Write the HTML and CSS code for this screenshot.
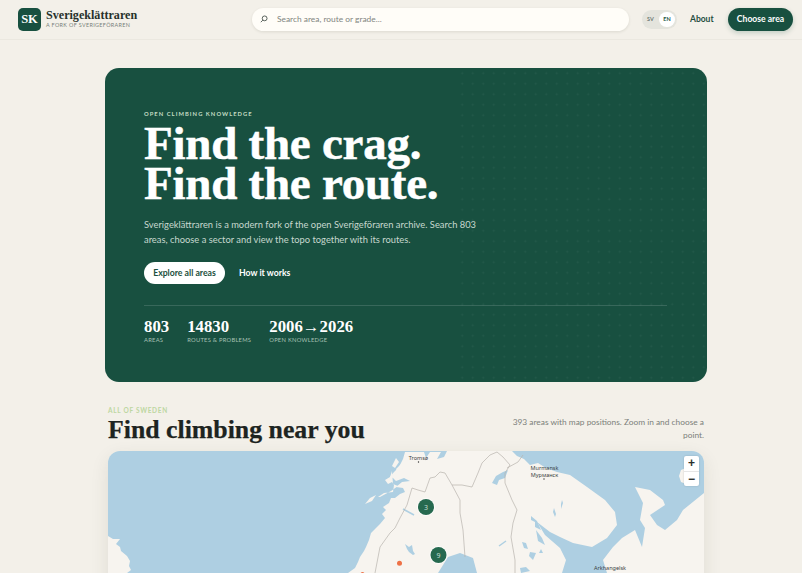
FILE: index.html
```html
<!DOCTYPE html>
<html lang="en">
<head>
<meta charset="utf-8">
<title>Sverigeklättraren</title>
<link rel="stylesheet" href="styles.css">
</head>
<body>
<header class="topbar">
  <a class="brand" href="#">
    <span class="brand-mark">SK</span>
    <span class="brand-text">
      <span class="brand-name">Sverigeklättraren</span>
      <span class="brand-sub">A FORK OF SVERIGEFÖRAREN</span>
    </span>
  </a>
  <label class="search">
    <svg class="search-icon" viewBox="0 0 10 10" width="8" height="8" aria-hidden="true"><circle cx="5.8" cy="4.2" r="3" fill="none" stroke="#33403a" stroke-width="1"/><path d="M3.6 6.4 1 9" fill="none" stroke="#33403a" stroke-width="1"/></svg>
    <span class="search-text">Search area, route or grade...</span>
  </label>
  <div class="lang">
    <span class="lang-opt">SV</span>
    <span class="lang-opt lang-on">EN</span>
  </div>
  <a class="about" href="#">About</a>
  <a class="cta" href="#">Choose area</a>
</header>
<main class="page">
  <section class="hero">
    <div class="eyebrow">OPEN CLIMBING KNOWLEDGE</div>
    <h1 class="hero-title">Find the crag.<br>Find the route.</h1>
    <p class="hero-lead">Sverigeklättraren is a modern fork of the open Sverigeföraren archive. Search 803 areas, choose a sector and view the topo together with its routes.</p>
    <div class="hero-actions">
      <a class="btn-white" href="#">Explore all areas</a>
      <a class="btn-ghost" href="#">How it works</a>
    </div>
    <div class="stats">
      <div class="stat"><div class="stat-num">803</div><div class="stat-label">AREAS</div></div>
      <div class="stat"><div class="stat-num">14830</div><div class="stat-label">ROUTES &amp; PROBLEMS</div></div>
      <div class="stat"><div class="stat-num">2006→2026</div><div class="stat-label">OPEN KNOWLEDGE</div></div>
    </div>
  </section>
  <section class="near">
    <div class="near-head">
      <div>
        <div class="near-eyebrow">ALL OF SWEDEN</div>
        <h2 class="near-title">Find climbing near you</h2>
      </div>
      <p class="near-note">393 areas with map positions. Zoom in and choose a point.</p>
    </div>
    <div class="map">
      <svg class="map-svg" viewBox="108 451 596 420" width="596" height="420" aria-label="Map of northern Scandinavia">
        <rect class="water" x="108" y="451" width="596" height="420"/>
        <!-- Land mass, Norway coast round to Kola and the Arkhangelsk shore -->
        <path class="land" d="M348 573 355 568 358 562 360 557 364 551 366 547 369 540 371 533 376 528 380 524 385 518 382 514 386 510 383 507 389 503 391 498 395 498 400 494 405 492 403 488 396 487 402 482 410 481 404 478 396 481 393 478 390 477 394 472 399 467 403 459 405 452 424 452 426 458 430 452 441 452 437 459 444 457 447 451 452 451 512 451 517 456 524 459 530 465 538 463 546 468 557 472 570 475 587 487 605 500 615 512 617 525 607 538 592 547 573 543 560 537 550 532 537 522 545 535 560 548 566 560 562 573 607 573 603 560 613 547 622 538 635 530 642 547 645 528 640 520 643 503 635 487 650 490 663 500 665 505 650 515 657 525 665 530 677 520 683 510 704 493 704 871 108 871 108 536 113 539 120 539 116 544 120 547 121 551 127 556 130 561 129 566 131 570 127 573 200 871 340 871Z"/>
        <!-- Norwegian islands -->
        <path class="land" d="M365 504 370 498 376 495 372 501ZM378 497 384 493 393 492 394 485 392 482 388 484 385 480 390 477 392 471 393 484 398 486 391 491 380 497Z"/>
        <path class="land" d="M396 469 402 463 404 468 398 472ZM392 466 396 458 399 462 395 468Z"/>
        <!-- Lakes and gulfs -->
        <path class="water" d="M438 573 448 557 460 553 473 558 477 573Z"/>
        <path class="water" d="M492 483 496 476 503 472 508 470 505 478 499 480 497 485Z"/>
        <path class="water-line" d="M403 509 414 515"/>
        <path class="water" d="M405 544 409 547 412 545 413 551 415 554 413 555 409 552 407 549Z"/>
        <path class="water-line" d="M499 546 506 541"/>
        <path class="water" d="M522 542 526 543 528 549 524 548ZM530 552 536 553 533 560 529 556ZM541 549 543 553 539 553Z"/>
        <path class="water" d="M531 516 537 521 541 530 535 527 535 522 531 520ZM536 530 542 538 545 545 538 541Z"/>
        <path class="water" d="M554 508 556 514 555 517 553 512ZM562 500 563 503 561 509 561 504Z"/>
        <path class="water" d="M520 568 526 567 530 571 521 573Z"/>
        <!-- Land arc behind the zoom control -->
        <path class="land" d="M686 468 681 470 679 476 681 482 686 484Z"/>
        <!-- Borders -->
        <path class="border" d="M375 573 380 547 390 533 395 528 400 518 407 505 412 488 418 490 425 492 430 478 435 477 440 472 445 473 452 485 460 500 460 513 463 530 465 557"/>
        <path class="border" d="M452 485 462 485 472 487 478 473 482 463 490 455 497 452 503 457 510 465 505 473 505 483 512 500 517 510 513 523 511 537 515 560 515 573"/>
        <path class="border" d="M507 468 518 462 523 455"/>
        <!-- Place labels -->
        <text class="place" x="418.500" y="460">Tromsø</text>
        <circle class="place-dot" cx="418.500" cy="462" r=".7"/>
        <text class="place" x="544.500" y="470">Murmansk</text>
        <text class="place" x="544.500" y="477">Мурманск</text>
        <circle class="place-dot" cx="544" cy="479" r=".7"/>
        <text class="place" x="610" y="570">Arkhangelsk</text>
        <!-- Points -->
        <circle class="pt" cx="399.500" cy="563.300" r="2.500"/>
        <circle class="pt" cx="362.500" cy="574" r="2"/>
        <circle class="cluster-halo" cx="426" cy="507" r="9"/>
        <circle class="cluster" cx="426" cy="507" r="8"/>
        <text class="cluster-num" x="426" y="509.500">3</text>
        <circle class="cluster-halo" cx="438.500" cy="555" r="9"/>
        <circle class="cluster" cx="438.500" cy="555" r="8"/>
        <text class="cluster-num" x="438.500" y="557.500">9</text>
      </svg>
      <div class="zoom">
        <span class="zoom-btn">+</span>
        <span class="zoom-btn">−</span>
      </div>
    </div>
  </section>
</main>
</body>
</html>
```
FILE: styles.css
```css
* { box-sizing: border-box; }
html, body { margin: 0; padding: 0; }
body {
  background: #f3f0e9;
  color: #1d2421;
  font-family: Lato, "Noto Sans", sans-serif;
}
a { color: inherit; text-decoration: none; }

.topbar {
  display: flex;
  align-items: center;
  height: 40px;
  padding: 0 9px 1px 18px;
  border-bottom: 1px solid #ebe8e0;
}
.brand { display: flex; align-items: center; gap: 5px; width: 234px; flex: none; }
.brand-mark {
  width: 23px;
  height: 23px;
  border-radius: 5px;
  background: #185040;
  color: #fff;
  font: 700 12.500px/23px "Liberation Serif", serif;
  text-align: center;
}
.brand-text { display: flex; flex-direction: column; }
.brand-name { font: 700 12.100px/12px "Liberation Serif", serif; color: #26302b; }
.brand-sub { font-size: 5.400px; line-height: 8px; letter-spacing: .36px; color: #77807a; }

.search {
  display: flex;
  align-items: center;
  width: 377px;
  height: 23px;
  padding-left: 8px;
  flex: none;
  border-radius: 12px;
  background: #fffdf8;
  box-shadow: 0 1px 3px rgba(60, 55, 40, .12);
}
.search-icon { flex: none; }
.search-text { margin-left: 9px; font-size: 8.400px; color: #7f8580; }

.lang {
  display: flex;
  align-items: center;
  justify-content: space-between;
  width: 35px;
  height: 19px;
  margin-left: 13px;
  padding: 2px 2px 2px 5px;
  flex: none;
  border-radius: 10px;
  background: #e4e4dd;
}
.lang-opt { font-size: 5.500px; font-weight: 700; color: #6f7a74; }
.lang-on {
  width: 16px;
  height: 15px;
  border-radius: 8px;
  background: #fff;
  color: #1c5443;
  line-height: 15px;
  text-align: center;
}
.about { margin-left: 13px; font-size: 8.500px; font-weight: 700; color: #1f4d3f; }
.cta {
  width: 65px;
  height: 23px;
  margin-left: auto;
  border-radius: 12px;
  background: #185040;
  color: #fff;
  font-size: 8.600px;
  font-weight: 700;
  line-height: 23px;
  text-align: center;
  box-shadow: 0 2px 5px rgba(24, 80, 64, .22);
}

.page { padding: 28px 95px 0 105px; }

.hero {
  position: relative;
  height: 314px;
  padding: 42px 40px 0 39px;
  border-radius: 14px;
  background: #185040;
  overflow: hidden;
}
.hero::after {
  content: "";
  position: absolute;
  top: 0;
  right: 0;
  bottom: 0;
  width: 250px;
  background-image: radial-gradient(circle, rgba(255, 255, 255, .055) .8px, transparent 1.1px);
  background-size: 10.500px 10.500px;
  pointer-events: none;
}
.eyebrow { font-size: 5.800px; font-weight: 700; line-height: 8px; letter-spacing: 1.05px; color: #c4dcc4; }
.hero-title {
  margin: 5px 0 0;
  font: 700 47px/40px "Liberation Serif", serif;
  letter-spacing: -.25px;
  color: #fff;
  -webkit-text-stroke: .5px #fff;
}
.hero-lead {
  width: 340px;
  margin: 14px 0 0;
  font-size: 9.350px;
  line-height: 15.300px;
  color: #c7d8cf;
}
.hero-actions { display: flex; align-items: center; gap: 14px; margin-top: 14px; }
.btn-white {
  width: 81px;
  height: 22px;
  border-radius: 11px;
  background: #fff;
  color: #1c5040;
  font-size: 8.700px;
  font-weight: 700;
  line-height: 22px;
  text-align: center;
}
.btn-ghost { font-size: 8.700px; font-weight: 700; color: #fff; }
.stats {
  display: flex;
  gap: 18px;
  margin-top: 21px;
  padding-top: 12px;
  border-top: 1px solid rgba(255, 255, 255, .14);
}
.stat-num { font: 700 16.800px/18px "Liberation Serif", serif; color: #fff; }
.stat-label { font-size: 5.800px; line-height: 8px; letter-spacing: .25px; color: #a7c0b4; }

.near { padding: 17px 3px 0; }
.near-head { display: flex; justify-content: space-between; align-items: flex-end; height: 44px; }
.near-eyebrow { font-size: 6.500px; font-weight: 700; line-height: 8px; letter-spacing: .7px; color: #bdd7a2; }
.near-title {
  margin: 2px 0 0;
  font: 700 25.800px/26px "Liberation Serif", serif;
  color: #1d2421;
  -webkit-text-stroke: .25px #1d2421;
}
.near-note {
  width: 195px;
  margin: 0 0 2px;
  font-size: 8.350px;
  line-height: 12.500px;
  text-align: right;
  color: #7b7f7a;
}
.map {
  position: relative;
  height: 420px;
  margin-top: 8px;
  border-radius: 12px;
  overflow: hidden;
  box-shadow: 0 6px 18px rgba(60, 55, 40, .1);
}
.map-svg { display: block; }
.water { fill: #aecfe2; }
.water-line { stroke: #aecfe2; stroke-width: 1.500; fill: none; }
.land { fill: #f7f4ef; }
.border { fill: none; stroke: #b8b3ae; stroke-width: .7; }
.place {
  fill: #3b3f42;
  font-family: "Noto Sans", sans-serif;
  font-size: 5.500px;
  text-anchor: middle;
}
.place-dot { fill: #333; }
.pt { fill: #ee7146; }
.cluster { fill: #26694f; }
.cluster-halo { fill: rgba(255, 255, 255, .75); }
.cluster-num {
  fill: #c9dfd5;
  font-family: "Noto Sans", sans-serif;
  font-size: 7px;
  text-anchor: middle;
}
.zoom {
  position: absolute;
  top: 5px;
  right: 5px;
  display: flex;
  flex-direction: column;
  width: 15px;
  border-radius: 2px;
  background: #fff;
  box-shadow: 0 0 2px rgba(0, 0, 0, .18);
}
.zoom-btn {
  height: 15px;
  font: 700 12px/15px "Liberation Sans", sans-serif;
  text-align: center;
  color: #2a2f2d;
}
.zoom-btn + .zoom-btn { border-top: 1px solid #e6e6e6; }
```
